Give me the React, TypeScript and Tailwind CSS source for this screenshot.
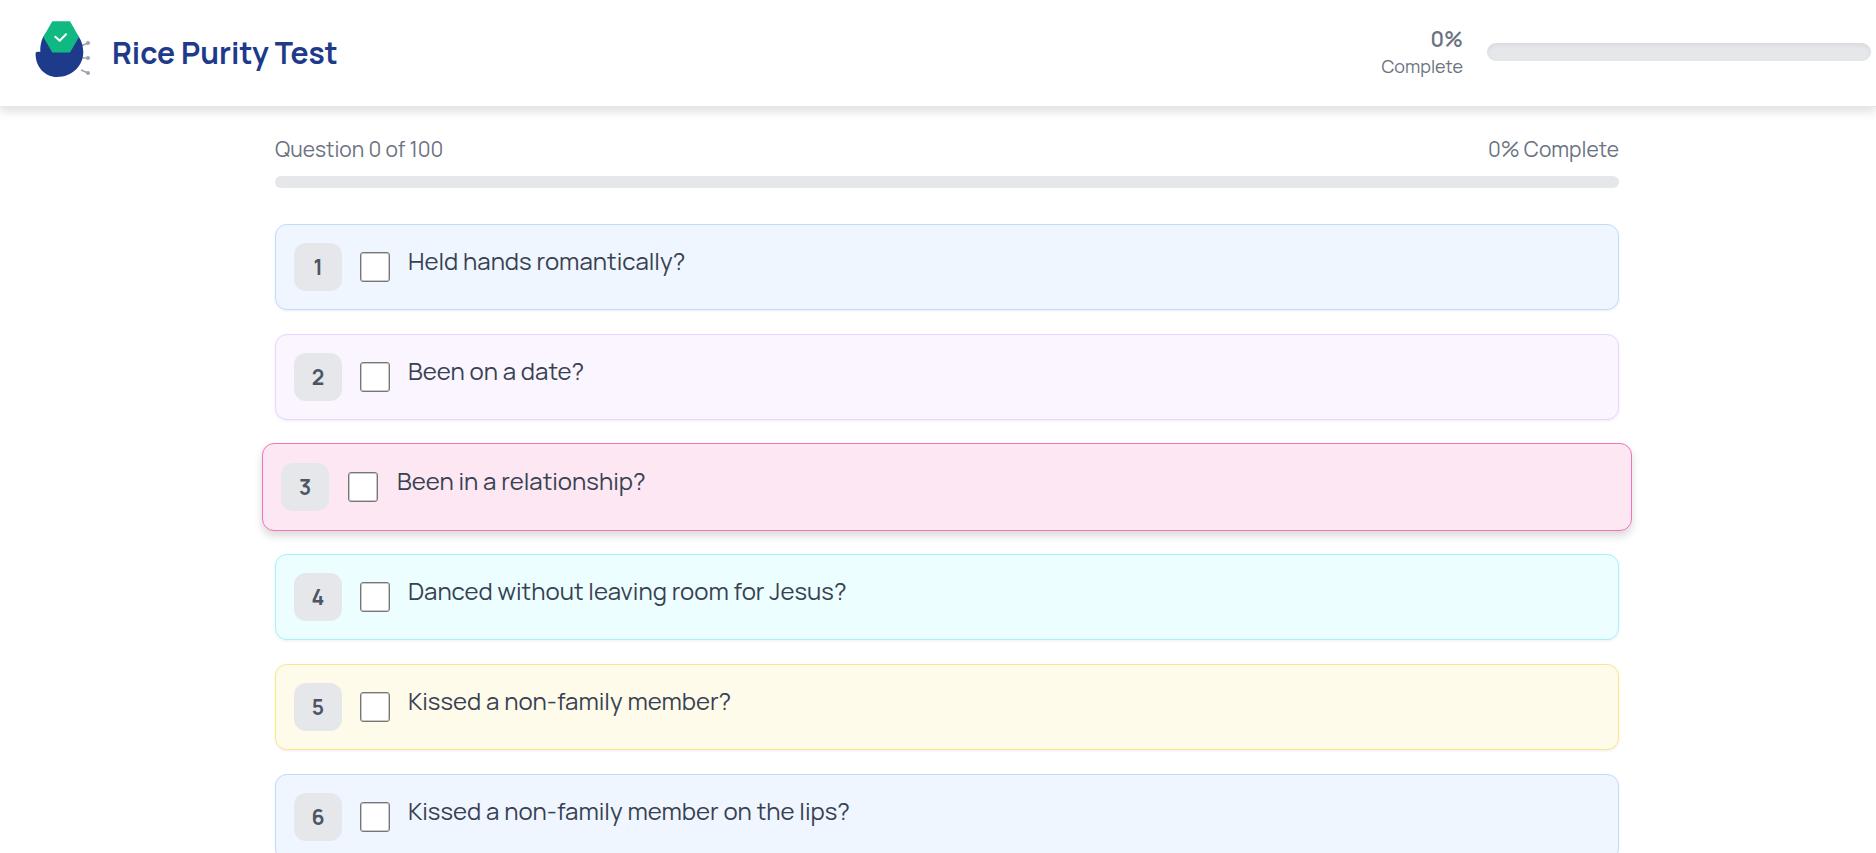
import { useState } from 'react';

interface Question {
  id: number;
  text: string;
}

const QUESTIONS: Question[] = [
  { id: 1, text: 'Held hands romantically?' },
  { id: 2, text: 'Been on a date?' },
  { id: 3, text: 'Been in a relationship?' },
  { id: 4, text: 'Danced without leaving room for Jesus?' },
  { id: 5, text: 'Kissed a non-family member?' },
  { id: 6, text: 'Kissed a non-family member on the lips?' },
];

const TOTAL = 100;

// Card colors repeat every five questions
const CARD_COLORS = [
  'bg-[#eff6ff] border-[#bfdbfe]',
  'bg-[#faf5ff] border-[#e9d5ff]',
  'bg-[#fce7f3] border-[#f472b6]',
  'bg-[#ecfeff] border-[#a5f3fc]',
  'bg-[#fffbeb] border-[#fde68a]',
];

const Logo = () => (
  <svg viewBox="0 0 56 58" className="h-[58px] w-14" aria-hidden="true">
    <path
      d="M46 26 L53 23 M46 38 H53 M46 50 L53 53"
      fill="none"
      stroke="#9ca3af"
      strokeWidth="1.4"
    />
    <g fill="#9ca3af">
      <circle cx="53" cy="23" r="2" />
      <circle cx="53" cy="38" r="2" />
      <circle cx="53" cy="53" r="2" />
    </g>
    <path
      d="M5.3 32 C5 16 13 7 25 7 C39 7 48.3 18 48.3 32 C48.3 46 37 57 22 57 C10 57 0.2 47 0.6 33 C1.6 31.5 4 31.8 5.3 32 Z"
      fill="#1e3a8a"
    />
    <path d="M17.3 1.3 H35 L44 17 L35 32.6 H17.3 L8.3 17 Z" fill="#10b981" />
    <path
      d="M20.3 16.7 L24.7 20.7 L31 14.3"
      fill="none"
      stroke="#fff"
      strokeWidth="2"
      strokeLinecap="round"
      strokeLinejoin="round"
    />
  </svg>
);

interface QuestionCardProps {
  question: Question;
  color: string;
  active: boolean;
  checked: boolean;
  onToggle: () => void;
}

const QuestionCard = ({ question, color, active, checked, onToggle }: QuestionCardProps) => (
  <label
    className={`flex cursor-pointer items-start rounded-xl border ${color} ${
      active
        ? '-mx-[13px] -my-px gap-[19px] px-[18px] py-[19px] shadow-[0_5px_9px_rgba(0,0,0,0.15)]'
        : 'gap-[18px] p-[18px] shadow-[0_1px_3px_rgba(0,0,0,0.07)]'
    }`}
  >
    <span className="flex size-12 shrink-0 items-center justify-center rounded-xl bg-[#e5e7eb] pt-px text-[21px] font-bold text-[#4b5563]">
      {question.id}
    </span>
    <input
      type="checkbox"
      checked={checked}
      onChange={onToggle}
      className="mt-[9px] size-[30px] shrink-0 appearance-none rounded-[3px] border border-[#767676] bg-white inset-ring inset-ring-[#767676]/40 checked:bg-blue-600"
    />
    <span className="flex-1 text-2xl leading-9 font-normal text-[#374151]">{question.text}</span>
  </label>
);

export default function App() {
  const [answered, setAnswered] = useState<number[]>([]);
  const percent = Math.round((answered.length / TOTAL) * 100);

  const toggle = (id: number) => {
    setAnswered((prev) => (prev.includes(id) ? prev.filter((x) => x !== id) : [...prev, id]));
  };

  return (
    <div className="h-screen overflow-hidden bg-white font-['Manrope','Inter',sans-serif]">
      {/* Header */}
      <header className="flex h-[107px] items-center justify-between border-b border-[#e5e7eb] bg-white pr-[5px] pl-[35px] shadow-[0_5px_9px_rgba(0,0,0,0.12)]">
        <a href="#" className="flex items-center gap-[21px]">
          <span className="pb-2">
            <Logo />
          </span>
          <span className="text-3xl font-bold text-[#1e3a8a]">Rice Purity Test</span>
        </a>
        <div className="flex items-center gap-6 pb-0.5">
          <div className="text-right text-[#6b7280]">
            <div className="text-[21px] leading-7 font-semibold">{percent}%</div>
            <div className="text-lg leading-[26px] font-normal">Complete</div>
          </div>
          <div className="h-[18px] w-96 overflow-hidden rounded-full bg-[#e5e7eb] shadow-[inset_0_2px_5px_rgba(0,0,0,0.06)]">
            <div className="h-full rounded-full bg-blue-600" style={{ width: `${percent}%` }} />
          </div>
        </div>
      </header>

      {/* Questions */}
      <div className="pl-[18px]">
        <main className="mx-auto max-w-[1344px] pt-7">
          <div className="mb-3 flex justify-between text-[21px] leading-[29px] font-normal text-[#6b7280]">
            <span>Question {answered.length} of {TOTAL}</span>
            <span>{percent}% Complete</span>
          </div>
          <div className="h-3 overflow-hidden rounded-full bg-[#e5e7eb]">
            <div className="h-full rounded-full bg-blue-600" style={{ width: `${percent}%` }} />
          </div>

          <div className="mt-9 flex flex-col gap-6">
            {QUESTIONS.map((q, i) => (
              <QuestionCard
                key={q.id}
                question={q}
                color={CARD_COLORS[i % CARD_COLORS.length]}
                active={q.id === 3}
                checked={answered.includes(q.id)}
                onToggle={() => toggle(q.id)}
              />
            ))}
          </div>
        </main>
      </div>
    </div>
  );
}
